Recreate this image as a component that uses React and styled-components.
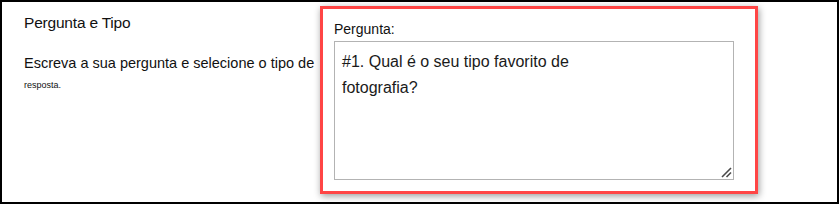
import React from 'react'
import styled, { createGlobalStyle } from 'styled-components'

const GlobalStyle = createGlobalStyle`
  html, body {
    margin: 0;
    padding: 0;
    background: #ffffff;
  }
  body {
    font-family: "Liberation Sans", Arial, sans-serif;
    color: #111;
  }
`

const Frame = styled.div`
  width: 839px;
  height: 204px;
  box-sizing: border-box;
  border: 2px solid #000;
  display: flex;
  align-items: flex-start;
  background: #fff;
`

const Intro = styled.div`
  flex: 0 0 318px;
  box-sizing: border-box;
  padding: 12px 0 0 22px;
`

const Title = styled.h2`
  margin: 0;
  font-size: 15.5px;
  line-height: 18px;
  font-weight: 400;
  letter-spacing: -0.2px;
  color: #111;
`

const Description = styled.p`
  margin: 23px 0 0;
  font-size: 14.5px;
  line-height: 17px;
  white-space: nowrap;
  color: #111;
`

const Small = styled.p`
  margin: 8px 0 0;
  font-size: 9px;
  line-height: 11px;
  color: #111;
`

const Panel = styled.div`
  margin-top: 4px;
  width: 438px;
  height: 188px;
  box-sizing: border-box;
  border: 3px solid #ff4545;
  box-shadow: 1px 2px 7px rgba(0, 0, 0, 0.4);
  padding: 12px 0 0 11px;
  display: flex;
  flex-direction: column;
  gap: 4px;
`

const Label = styled.label`
  font-size: 14px;
  line-height: 16px;
  color: #111;
`

const FieldWrap = styled.div`
  position: relative;
  width: 400px;
  height: 139px;
`

const Field = styled.textarea`
  display: block;
  width: 100%;
  height: 100%;
  box-sizing: border-box;
  margin: 0;
  padding: 7px 7px;
  border: 1px solid #b3b3b3;
  font-family: "Liberation Sans", Arial, sans-serif;
  font-size: 16px;
  line-height: 26px;
  color: #1a1a1a;
  outline: none;
  resize: none;
  background: #fff;
`

const Grip = styled.svg`
  position: absolute;
  right: 2px;
  bottom: 2px;
  width: 11px;
  height: 11px;
  pointer-events: none;
`

const App = () => {
  return (
    <>
      <GlobalStyle />
      <Frame>
        <Intro>
          <Title>Pergunta e Tipo</Title>
          <Description>Escreva a sua pergunta e selecione o tipo de</Description>
          <Small>resposta.</Small>
        </Intro>
        <Panel>
          <Label htmlFor="pergunta">Pergunta:</Label>
          <FieldWrap>
            <Field
              id="pergunta"
              defaultValue={'#1. Qual é o seu tipo favorito de\nfotografia?'}
            />
            <Grip viewBox="0 0 11 11">
              <line x1="10" y1="1" x2="1" y2="10" stroke="#4a4a4a" strokeWidth="1.6" />
              <line x1="10" y1="5.5" x2="5.5" y2="10" stroke="#4a4a4a" strokeWidth="1.6" />
            </Grip>
          </FieldWrap>
        </Panel>
      </Frame>
    </>
  )
}

export default App
